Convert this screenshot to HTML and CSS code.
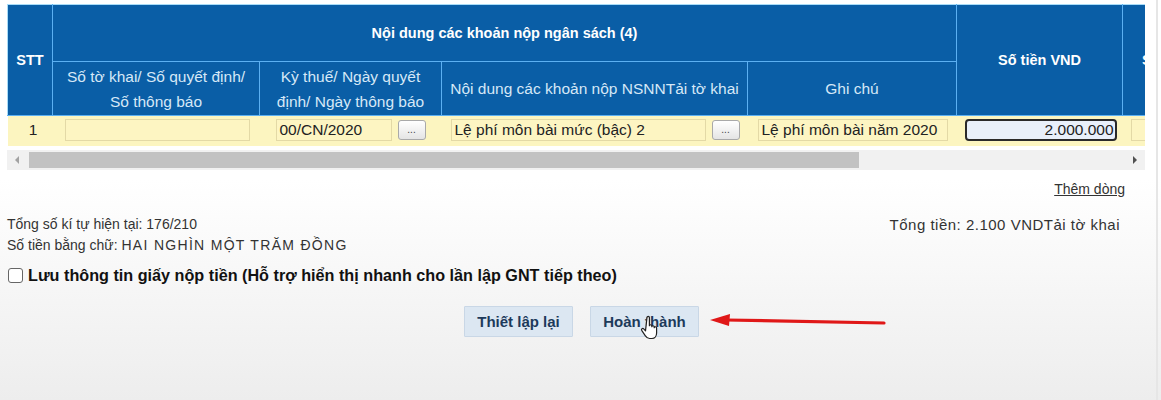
FILE: index.html
```html
<!DOCTYPE html>
<html lang="vi">
<head>
<meta charset="utf-8">
<title>Giấy nộp tiền</title>
<link rel="stylesheet" href="styles.css">
</head>
<body>
<div class="page">
  <div class="grid-wrap">
    <table class="grid">
      <colgroup>
        <col class="c-stt"><col class="c-1"><col class="c-2"><col class="c-3"><col class="c-4"><col class="c-5"><col class="c-6">
      </colgroup>
      <thead>
        <tr class="h1">
          <th rowspan="2" class="bold">STT</th>
          <th colspan="4" class="bold">Nội dung các khoản nộp ngân sách (4)</th>
          <th rowspan="2" class="bold">Số tiền VND</th>
          <th rowspan="2" class="bold last">Số tiền</th>
        </tr>
        <tr class="h2">
          <th>Số tờ khai/ Số quyết định/<br>Số thông báo</th>
          <th>Kỳ thuế/ Ngày quyết<br>định/ Ngày thông báo</th>
          <th>Nội dung các khoản nộp NSNNTải tờ khai</th>
          <th>Ghi chú</th>
        </tr>
      </thead>
      <tbody>
        <tr class="data">
          <td class="stt">1</td>
          <td><div class="inp w1"></div></td>
          <td><div class="pair"><div class="inp w2">00/CN/2020</div><div class="dots">...</div></div></td>
          <td><div class="pair"><div class="inp w3">Lệ phí môn bài mức (bậc) 2</div><div class="dots">...</div></div></td>
          <td><div class="inp w4">Lệ phí môn bài năm 2020</div></td>
          <td><div class="inp money">2.000.000</div></td>
          <td><div class="inp w6"></div></td>
        </tr>
      </tbody>
    </table>
  </div>
  <div class="hscroll">
    <span class="arrow left"></span>
    <div class="track"><div class="thumb"></div></div>
    <span class="arrow right"></span>
  </div>

  <div class="addrow"><a>Thêm dòng</a></div>

  <div class="summary">
    <div class="sum-left">
      <div>Tổng số kí tự hiện tại: 176/210</div>
      <div>Số tiền bằng chữ: <span class="caps">HAI NGHÌN MỘT TRĂM ĐỒNG</span></div>
    </div>
    <div class="sum-right">Tổng tiền: 2.100 VNDTải tờ khai</div>
  </div>

  <label class="save"><span class="cb"></span>Lưu thông tin giấy nộp tiền (Hỗ trợ hiển thị nhanh cho lần lập GNT tiếp theo)</label>

  <div class="actions">
    <button class="btn">Thiết lập lại</button>
    <button class="btn">Hoàn thành</button>
  </div>

  <svg class="cursor" width="22" height="26" viewBox="0 0 22 26">
    <path d="M7 2.5c0-1.4 2.4-1.4 2.4 0v8.2c0-1.3 2.4-1.3 2.4 0v1c0-1.3 2.4-1.3 2.4 0v1c0-1.3 2.4-1.3 2.4 0v5.3c0 3-1.8 5.5-4.600 5.5h-2.4c-2 0-3.2-1-4.4-2.8l-3.5-5.4c-0.8-1.3 1-2.5 2-1.4l1.8 2z" fill="#fff" stroke="#222" stroke-width="1.2" stroke-linejoin="round"/>
  </svg>

  <svg class="redarrow" width="180" height="20" viewBox="0 0 180 20">
    <line x1="176" y1="11" x2="18" y2="8" stroke="#e01818" stroke-width="3.2" stroke-linecap="round"/>
    <polygon points="2,8 22,2 21,14" fill="#e01818"/>
  </svg>
</div>
</body>
</html>
```
FILE: styles.css
```css
html, body {
  margin: 0;
  padding: 0;
}
body {
  width: 1161px;
  height: 400px;
  overflow: hidden;
  background: linear-gradient(to bottom, #ffffff 0%, #ffffff 45%, #ededed 100%);
  font-family: "Liberation Sans", Arial, sans-serif;
  color: #333;
}
.page {
  position: relative;
  height: 400px;
  padding: 4px 0 0 7px;
  box-sizing: border-box;
  border-right: 2px solid #e6e6e6;
  width: 1158px;
}
.grid-wrap {
  width: 1138px;
  overflow: hidden;
}
.grid {
  border-collapse: collapse;
  table-layout: fixed;
  width: 1200px;
}
.c-stt { width: 45px; }
.c-1 { width: 207px; }
.c-2 { width: 182px; }
.c-3 { width: 306px; }
.c-4 { width: 209px; }
.c-5 { width: 166px; }
.c-6 { width: 85px; }
.grid th {
  background: #0a5ea6;
  border: 1px solid #5cb0f2;
  color: #d6e8f7;
  font-weight: normal;
  font-size: 15.5px;
  line-height: 25px;
  padding: 0;
  text-align: center;
}
.grid th.bold {
  color: #fff;
  font-weight: bold;
  font-size: 14.5px;
}
.grid th.last {
  text-align: left;
  padding-left: 19px;
  white-space: nowrap;
}
.grid tr.h1 th { height: 56px; }
.grid tr.h2 th { height: 53px; }
.grid thead tr:first-child th { border-top-color: #a8dcf8; }
.grid tr.h1 th:first-child { border-left-color: #a8dcf8; }
.grid td {
  background: #fcf5c0;
  border: none;
  padding: 3px 0 5px 0;
  height: 22px;
  font-size: 15.5px;
  color: #222;
}
.grid td.stt {
  text-align: center;
  padding-left: 6px;
}
.inp {
  box-sizing: border-box;
  height: 22px;
  background: #fdf5c2;
  border: 1px solid #e3d9a6;
  line-height: 20px;
  padding: 0 3px;
  white-space: nowrap;
  overflow: hidden;
  font-size: 15.5px;
  color: #222;
}
.w1 { width: 185px; margin-left: 12px; }
.pair {
  display: flex;
  align-items: center;
  gap: 6px;
}
.w2 { width: 116px; margin-left: 16px; }
.w3 { width: 255px; margin-left: 9px; }
.w4 { width: 190px; margin-left: 10px; }
.dots {
  box-sizing: border-box;
  width: 28px;
  height: 20px;
  border: 1px solid #a9a9a9;
  border-radius: 3px;
  background: linear-gradient(#ffffff, #e4e4e4);
  font-size: 10px;
  line-height: 18px;
  text-align: center;
  color: #444;
}
.money {
  width: 152px;
  margin-left: 8px;
  background: #e9f0fa;
  border: 2px solid #2a2a2a;
  border-radius: 4px;
  text-align: right;
  line-height: 18px;
  padding-right: 1px;
}
.w6 { width: 40px; margin-left: 8px; }

.hscroll {
  margin-top: 4px;
  width: 1138px;
  height: 20px;
  background: #f1f1f1;
  display: flex;
  align-items: center;
}
.arrow {
  width: 0;
  height: 0;
  border-top: 4px solid transparent;
  border-bottom: 4px solid transparent;
}
.arrow.left {
  border-right: 4px solid #a3a3a3;
  margin: 0 10px 0 8px;
}
.arrow.right {
  border-left: 4px solid #505050;
  margin: 0 8px 0 10px;
}
.track {
  flex: 1;
  height: 16px;
}
.thumb {
  width: 830px;
  height: 16px;
  background: #c2c2c2;
}

.addrow {
  width: 1118px;
  text-align: right;
  margin-top: 10px;
  font-size: 14px;
  line-height: 18px;
}
.addrow a {
  color: #333;
  text-decoration: underline;
}
.summary {
  display: flex;
  justify-content: space-between;
  width: 1113px;
  margin-top: 16px;
  font-size: 14px;
  line-height: 21px;
}
.caps {
  letter-spacing: 1.3px;
}
.sum-right {
  font-size: 15px;
  letter-spacing: 0.5px;
}
.save {
  display: flex;
  align-items: center;
  gap: 5px;
  margin-top: 9px;
  font-size: 16.2px;
  font-weight: bold;
  color: #111;
  line-height: 20px;
}
.cb {
  box-sizing: border-box;
  width: 15px;
  height: 15px;
  border: 1px solid #666;
  border-radius: 3px;
  background: #fff;
  margin-left: 1px;
}
.actions {
  display: flex;
  gap: 17px;
  margin: 21px 0 0 457px;
}
.btn {
  box-sizing: border-box;
  width: 109px;
  height: 31px;
  background: #dce7f2;
  border: 1px solid #c9d7e6;
  border-radius: 1px;
  font-family: "Liberation Sans", Arial, sans-serif;
  font-weight: bold;
  font-size: 15px;
  color: #1d3a5b;
  padding: 0;
}
.cursor {
  position: absolute;
  left: 640px;
  top: 315px;
}
.redarrow {
  position: absolute;
  left: 708px;
  top: 312px;
}
```
